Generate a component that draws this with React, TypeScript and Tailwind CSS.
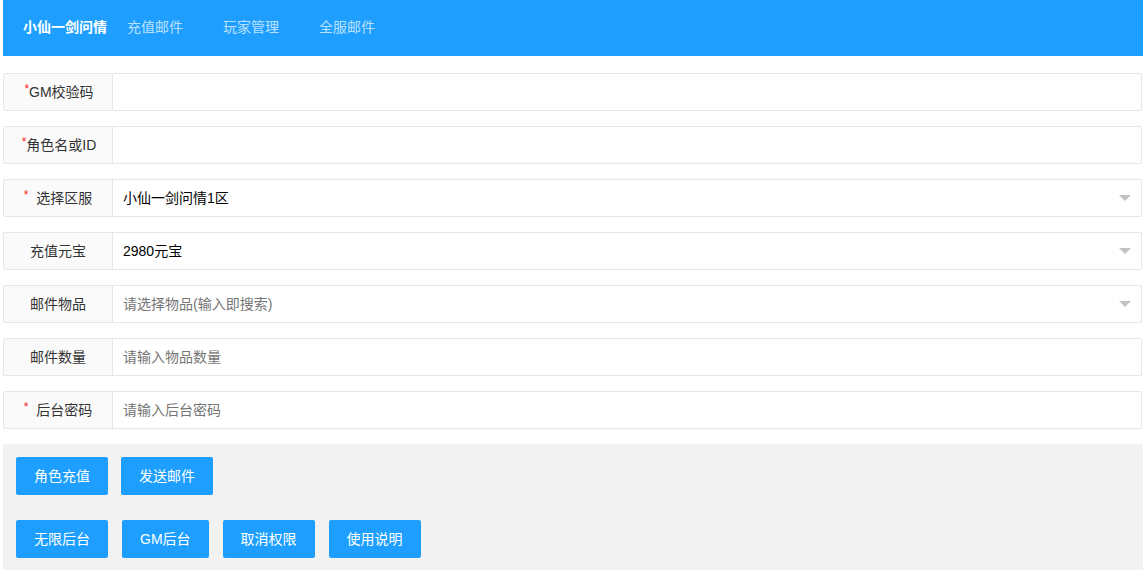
import React from "react";

// ─── Form row ─────────────────────────────────────────────────────────────────

interface RowProps {
  label: string;
  required?: boolean;
  spaced?: boolean;
  value?: string;
  placeholder?: string;
  select?: boolean;
}

function Row({ label, required, spaced, value, placeholder, select }: RowProps) {
  return (
    <div className="flex h-[38px] rounded-[2px] border border-[#e6e6e6] bg-white mb-[15px]">
      <div className="w-[109px] shrink-0 flex items-center justify-center bg-[#fafafa] border-r border-[#e6e6e6] text-[14px] text-[#333] rounded-l-[2px]">
        {required && (
          <span className={"text-[#ff2020] text-[12px] leading-none self-start mt-[9px] " + (spaced ? "mr-[8px]" : "mr-0")}>*</span>
        )}
        <span className={required && !spaced ? "-mr-[2px]" : ""}>{label}</span>
      </div>
      <div className="flex-1 flex items-center pl-[10px] pr-[10px] text-[14px]">
        {value && <span className="text-[#000]">{value}</span>}
        {placeholder && <span className="text-[#757575]">{placeholder}</span>}
        {select && (
          <span className="ml-auto w-0 h-0 border-l-[6px] border-r-[6px] border-t-[6px] border-l-transparent border-r-transparent border-t-[#c2c2c2]" />
        )}
      </div>
    </div>
  );
}

function Btn({ children }: { children: React.ReactNode }) {
  return (
    <button className="h-[38px] px-[18px] rounded-[2px] bg-[#1e9fff] text-white text-[14px] whitespace-nowrap">
      {children}
    </button>
  );
}

export default function App() {
  return (
    <div
      className="w-[1145px] h-[570px] overflow-hidden bg-white"
      style={{ fontFamily: '"Liberation Sans", "Noto Sans CJK SC", sans-serif' }}
    >
      <div className="ml-[3px] w-[1140px]">
        <div className="h-[56px] bg-[#1e9fff] flex items-center text-[14px] pb-[2px]">
          <span className="pl-[20px] font-bold text-white">小仙一剑问情</span>
          <span className="px-[20px] text-white/70">充值邮件</span>
          <span className="px-[20px] text-white/70">玩家管理</span>
          <span className="px-[20px] text-white/70">全服邮件</span>
        </div>

        <div className="pt-[17px] pr-[1px]">
          <Row label="GM校验码" required />
          <Row label="角色名或ID" required />
          <Row label="选择区服" required spaced value="小仙一剑问情1区" select />
          <Row label="充值元宝" value="2980元宝" select />
          <Row label="邮件物品" placeholder="请选择物品(输入即搜索)" select />
          <Row label="邮件数量" placeholder="请输入物品数量" />
          <Row label="后台密码" required spaced placeholder="请输入后台密码" />
        </div>

        <div className="bg-[#f2f2f2] px-[13px] pt-[13px] pb-[13px] flex flex-col gap-[25px]">
          <div className="flex gap-[13px]">
            <Btn>角色充值</Btn>
            <Btn>发送邮件</Btn>
          </div>
          <div className="flex gap-[14px]">
            <Btn>无限后台</Btn>
            <Btn>GM后台</Btn>
            <Btn>取消权限</Btn>
            <Btn>使用说明</Btn>
          </div>
        </div>
      </div>
    </div>
  );
}
